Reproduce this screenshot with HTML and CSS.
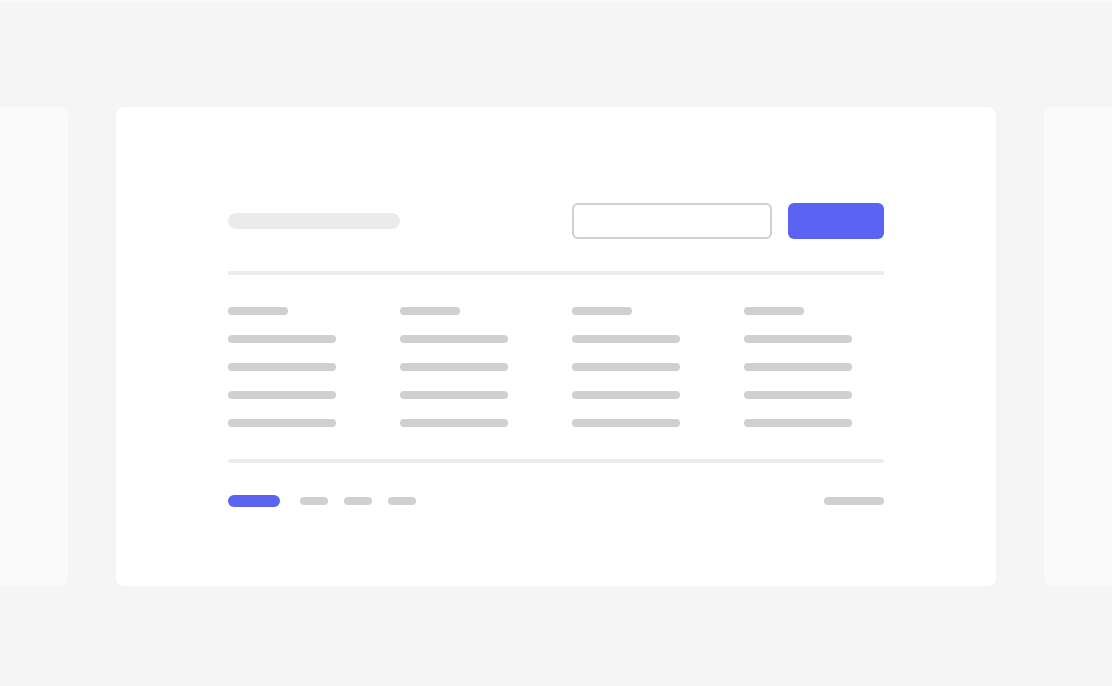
FILE: index.html
```html
<!DOCTYPE html>
<html>
<head>
<meta charset="utf-8">
<link rel="stylesheet" href="styles.css">
</head>
<body>
<div class="topline"></div>
<div class="stage">
  <div class="card ghost"></div>
  <div class="card main">
    <div class="header">
      <div class="title-bar"></div>
      <div class="spacer"></div>
      <div class="input"></div>
      <div class="button"></div>
    </div>
    <div class="divider"></div>
    <div class="table">
      <div class="col">
        <div class="th"></div>
        <div class="td"></div><div class="td"></div><div class="td"></div><div class="td"></div>
      </div>
      <div class="col">
        <div class="th"></div>
        <div class="td"></div><div class="td"></div><div class="td"></div><div class="td"></div>
      </div>
      <div class="col">
        <div class="th"></div>
        <div class="td"></div><div class="td"></div><div class="td"></div><div class="td"></div>
      </div>
      <div class="col">
        <div class="th"></div>
        <div class="td"></div><div class="td"></div><div class="td"></div><div class="td"></div>
      </div>
    </div>
    <div class="divider"></div>
    <div class="footer">
      <div class="page active"></div>
      <div class="pages">
        <div class="page"></div>
        <div class="page"></div>
        <div class="page"></div>
      </div>
      <div class="spacer"></div>
      <div class="count"></div>
    </div>
  </div>
  <div class="card ghost"></div>
</div>
</body>
</html>
```
FILE: styles.css
```css
html, body {
  margin: 0;
  padding: 0;
  background: #f5f5f5;
  font-family: "Liberation Sans", Arial, sans-serif;
  overflow: hidden;
}
.topline {
  height: 2px;
  background: #fafafa;
}
.stage {
  display: flex;
  justify-content: center;
  gap: 48px;
  padding-top: 105px;
  width: 1112px;
  overflow: hidden;
}
.card {
  flex: 0 0 880px;
  height: 479px;
  border-radius: 8px;
  background: #ffffff;
  box-sizing: border-box;
}
.card.ghost {
  background: #fafafa;
}
.card.main {
  padding: 96px 112px 0 112px;
  display: flex;
  flex-direction: column;
}
.header {
  display: flex;
  align-items: center;
  height: 36px;
}
.spacer { flex: 1; }
.title-bar {
  width: 172px;
  height: 16px;
  border-radius: 8px;
  background: #ebebeb;
}
.input {
  width: 200px;
  height: 36px;
  box-sizing: border-box;
  border: 2px solid #d0d0d0;
  border-radius: 6px;
  background: #fff;
}
.button {
  width: 96px;
  height: 36px;
  margin-left: 16px;
  border-radius: 6px;
  background: #5b63f2;
}
.divider {
  height: 4px;
  background: #ebebeb;
  margin-top: 32px;
  border-radius: 2px;
}
.table {
  display: grid;
  grid-template-columns: repeat(4, 140px);
  column-gap: 32px;
  padding-top: 32px;
}
.col {
  display: flex;
  flex-direction: column;
  gap: 20px;
}
.th {
  width: 60px;
  height: 8px;
  border-radius: 4px;
  background: #d0d0d0;
}
.td {
  width: 108px;
  height: 8px;
  border-radius: 4px;
  background: #d0d0d0;
}
.table + .divider {
  margin-top: 32px;
}
.footer {
  display: flex;
  align-items: center;
  margin-top: 32px;
  height: 12px;
}
.pages {
  display: flex;
  gap: 16px;
  margin-left: 20px;
}
.page {
  width: 28px;
  height: 8px;
  border-radius: 4px;
  background: #d0d0d0;
}
.page.active {
  width: 52px;
  height: 12px;
  border-radius: 6px;
  background: #5b63f2;
}
.count {
  width: 60px;
  height: 8px;
  border-radius: 4px;
  background: #d0d0d0;
}
```
